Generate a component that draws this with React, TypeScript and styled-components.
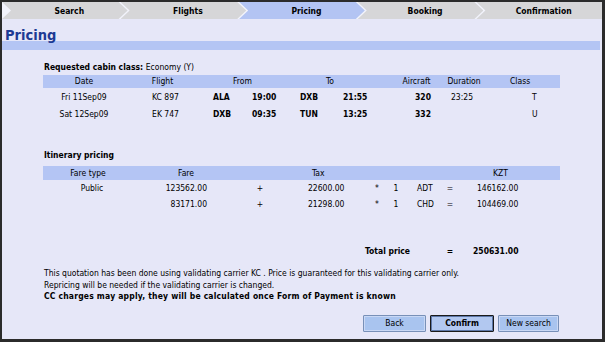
import React from 'react';
import styled, { createGlobalStyle, css } from 'styled-components';

const GlobalStyle = createGlobalStyle`
  html, body {
    margin: 0;
    padding: 0;
  }
  body {
    font-family: "DejaVu Sans Condensed", "DejaVu Sans", sans-serif;
    font-stretch: condensed;
    font-size: 8.5px;
    color: #000;
  }
  b, strong {
    letter-spacing: 0.2px;
  }
`;

const Frame = styled.div`
  width: 605px;
  height: 342px;
  box-sizing: border-box;
  border-style: solid;
  border-color: #2b2b2b;
  border-width: 2px 3px 3px 2px;
  background: #e6e7f8;
  display: flex;
  flex-direction: column;
  overflow: hidden;
`;

const TabBar = styled.div`
  display: flex;
  height: 17px;
  background: #f2f3fb;
`;

const Tab = styled.div<{ $active?: boolean; $last?: boolean }>`
  flex: 1;
  margin-right: -7px;
  display: flex;
  align-items: center;
  justify-content: center;
  padding-left: 9px;
  font-weight: bold;
  background: ${(p) => (p.$active ? '#b3c4f3' : '#d6d6d8')};
  clip-path: polygon(0 0, calc(100% - 9px) 0, 100% 50%, calc(100% - 9px) 100%, 0 100%, 9px 50%);
  ${(p) =>
    p.$last &&
    css`
      margin-right: 0;
      clip-path: polygon(0 0, 100% 0, 100% 100%, 0 100%, 9px 50%);
    `}
`;

const TitleBlock = styled.div`
  height: 22px;
  display: flex;
  align-items: flex-end;
  padding-left: 3px;
`;

const PageTitle = styled.h1`
  margin: 0 0 -2px;
  font-size: 14.5px;
  line-height: 16px;
  font-weight: bold;
  color: #1d3a94;
  position: relative;
  z-index: 1;
`;

const TitleRule = styled.div`
  height: 9px;
  margin-right: 2px;
  background: #b4c5f4;
`;

const Content = styled.div`
  width: 517px;
  margin-left: 41px;
  display: flex;
  flex-direction: column;
`;

const SectionLabel = styled.div<{ $top: number }>`
  margin-top: ${(p) => p.$top}px;
  height: 12px;
  line-height: 12px;
  padding-left: 1px;
  font-weight: bold;

  span {
    font-weight: normal;
  }
`;

const segCols = '82px 75px 40px 45px 45px 45px 63px 52px 70px';
const priceCols = '90px 82px 90px 62px 20px 18px 35px 20px 100px';

const Grid = styled.div<{ $cols: string; $head?: boolean; $h: number; $top?: number }>`
  display: grid;
  grid-template-columns: ${(p) => p.$cols};
  height: ${(p) => p.$h}px;
  line-height: ${(p) => p.$h}px;
  margin-top: ${(p) => p.$top ?? 0}px;
  background: ${(p) => (p.$head ? '#b4c5f4' : 'transparent')};
`;

const Cell = styled.div<{ $align?: 'left' | 'center' | 'right'; $pl?: number; $pr?: number; $bold?: boolean; $span?: number }>`
  text-align: ${(p) => p.$align ?? 'center'};
  padding-left: ${(p) => p.$pl ?? 0}px;
  padding-right: ${(p) => p.$pr ?? 0}px;
  font-weight: ${(p) => (p.$bold ? 'bold' : 'normal')};
  grid-column: ${(p) => (p.$span ? `span ${p.$span}` : 'auto')};
  white-space: nowrap;
`;

const Notes = styled.div`
  margin-top: 10px;
  padding-left: 1px;
  line-height: 11.5px;

  strong {
    display: block;
  }
`;

const ButtonRow = styled.div`
  margin-top: 12px;
  display: flex;
  justify-content: flex-end;
  gap: 4px;
  padding-right: 1px;
`;

const Button = styled.button<{ $w: number; $primary?: boolean }>`
  width: ${(p) => p.$w}px;
  height: 17px;
  padding: 0;
  font: inherit;
  font-weight: ${(p) => (p.$primary ? 'bold' : 'normal')};
  color: #000;
  background: ${(p) => (p.$primary ? '#b2c8f0' : '#a9c4ef')};
  border: 1px solid ${(p) => (p.$primary ? '#1a1a1a' : '#7890b8')};
  box-shadow: inset 0 0 0 1px ${(p) => (p.$primary ? '#5d77a8' : '#c9d8f5')};
  border-radius: 1px;
`;

const tabs = ['Search', 'Flights', 'Pricing', 'Booking', 'Confirmation'];

const segments = [
  { date: 'Fri 11Sep09', flight: 'KC 897', from: 'ALA', dep: '19:00', to: 'DXB', arr: '21:55', ac: '320', dur: '23:25', cls: 'T' },
  { date: 'Sat 12Sep09', flight: 'EK 747', from: 'DXB', dep: '09:35', to: 'TUN', arr: '13:25', ac: '332', dur: '', cls: 'U' },
];

const fares = [
  { type: 'Public', fare: '123562.00', tax: '22600.00', pax: 'ADT', total: '146162.00' },
  { type: '', fare: '83171.00', tax: '21298.00', pax: 'CHD', total: '104469.00' },
];

export default function App() {
  return (
    <>
      <GlobalStyle />
      <Frame>
        <TabBar>
          {tabs.map((t, i) => (
            <Tab key={t} $active={t === 'Pricing'} $last={i === tabs.length - 1}>
              {t}
            </Tab>
          ))}
        </TabBar>
        <TitleBlock>
          <PageTitle>Pricing</PageTitle>
        </TitleBlock>
        <TitleRule />

        <Content>
          <SectionLabel $top={11}>
            Requested cabin class: <span>Economy (Y)</span>
          </SectionLabel>
          <Grid $cols={segCols} $head $h={13} $top={2}>
            <Cell>Date</Cell>
            <Cell>Flight</Cell>
            <Cell $span={2}>From</Cell>
            <Cell $span={2}>To</Cell>
            <Cell $pl={20}>Aircraft</Cell>
            <Cell>Duration</Cell>
            <Cell $align="left" $pl={20}>Class</Cell>
          </Grid>
          {segments.map((s) => (
            <Grid key={s.flight} $cols={segCols} $h={16} $top={1}>
              <Cell>{s.date}</Cell>
              <Cell $pl={6}>{s.flight}</Cell>
              <Cell $align="left" $pl={13} $bold>{s.from}</Cell>
              <Cell $align="left" $pl={12} $bold>{s.dep}</Cell>
              <Cell $align="left" $pl={15} $bold>{s.to}</Cell>
              <Cell $align="left" $pl={13} $bold>{s.arr}</Cell>
              <Cell $align="right" $pr={7} $bold>{s.ac}</Cell>
              <Cell $pr={4}>{s.dur}</Cell>
              <Cell $align="left" $pl={42}>{s.cls}</Cell>
            </Grid>
          ))}

          <SectionLabel $top={27}>Itinerary pricing</SectionLabel>
          <Grid $cols={priceCols} $head $h={14} $top={5}>
            <Cell>Fare type</Cell>
            <Cell $pl={24}>Fare</Cell>
            <Cell />
            <Cell $align="left" $pl={7}>Tax</Cell>
            <Cell $span={4} />
            <Cell $align="left" $pl={33}>KZT</Cell>
          </Grid>
          {fares.map((f) => (
            <Grid key={f.pax} $cols={priceCols} $h={16}>
              <Cell $pl={8}>{f.type}</Cell>
              <Cell $align="right" $pr={8}>{f.fare}</Cell>
              <Cell>+</Cell>
              <Cell $align="left" $pl={3}>{f.tax}</Cell>
              <Cell>*</Cell>
              <Cell>1</Cell>
              <Cell $align="left" $pl={12}>{f.pax}</Cell>
              <Cell>=</Cell>
              <Cell $align="left" $pl={17}>{f.total}</Cell>
            </Grid>
          ))}
          <Grid $cols={priceCols} $h={14} $top={32}>
            <Cell $span={3} />
            <Cell $span={4} $align="right" $pr={30} $bold>Total price</Cell>
            <Cell $bold>=</Cell>
            <Cell $align="left" $pl={13} $bold>250631.00</Cell>
          </Grid>

          <Notes>
            This quotation has been done using validating carrier KC . Price is guaranteed for this validating carrier only.
            <br />
            Repricing will be needed if the validating carrier is changed.
            <strong>CC charges may apply, they will be calculated once Form of Payment is known</strong>
          </Notes>

          <ButtonRow>
            <Button $w={63}>Back</Button>
            <Button $w={64} $primary>Confirm</Button>
            <Button $w={61}>New search</Button>
          </ButtonRow>
        </Content>
      </Frame>
    </>
  );
}
